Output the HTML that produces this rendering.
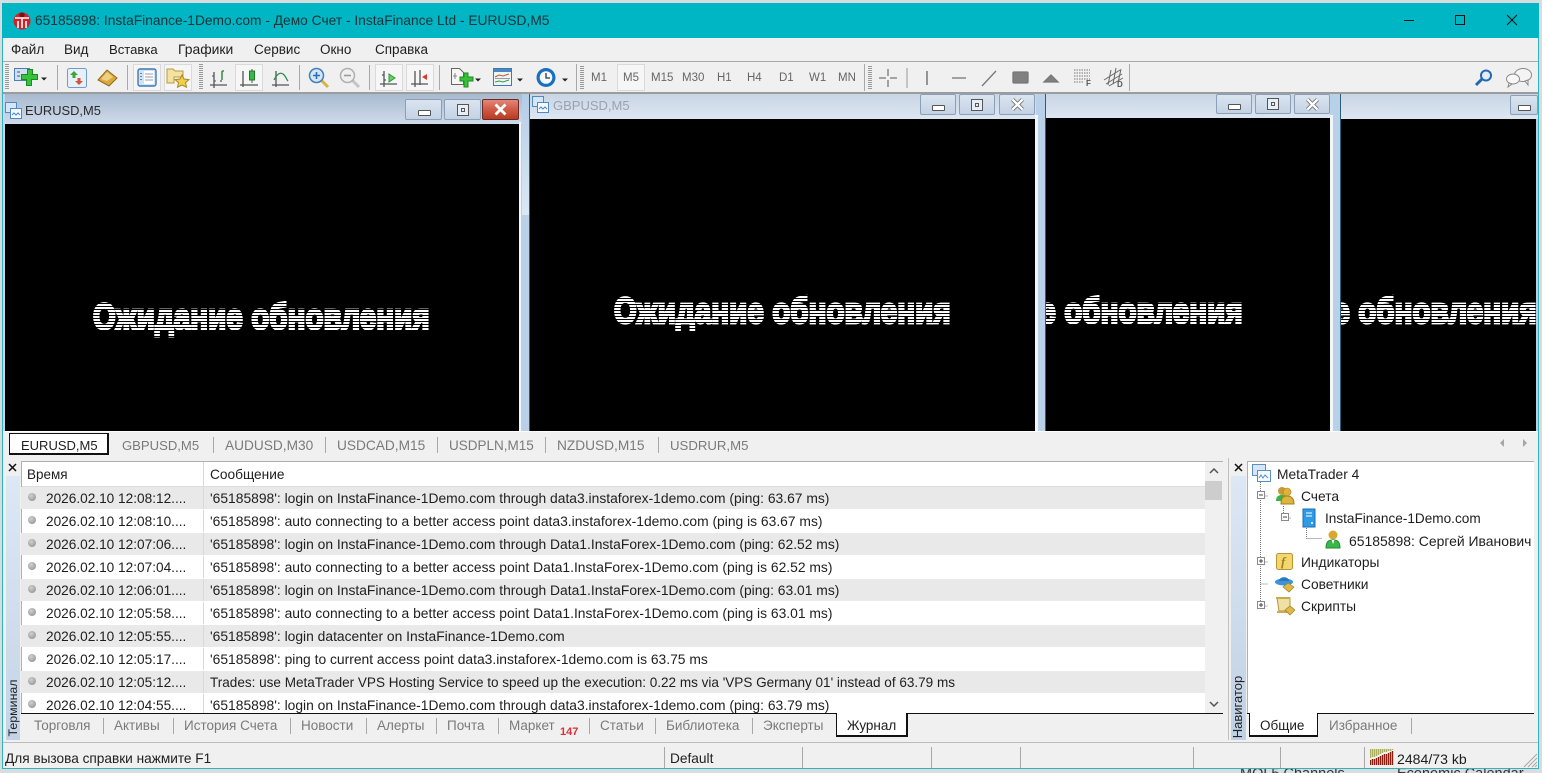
<!DOCTYPE html>
<html><head><meta charset="utf-8">
<style>
html,body{margin:0;padding:0;width:1542px;height:773px;overflow:hidden;background:#d9dcdc}
body{position:relative;font-family:"Liberation Sans",sans-serif;font-size:13.5px;color:#1e1e1e}
div,span,svg{position:absolute}
.t{white-space:nowrap;line-height:16px}
.g{color:#7a7a7a}
.sep{width:1px;background:#a8a8a8}
.prs{background:#f6f6f6;border:1px solid #dadada;box-sizing:border-box}
.grip{width:4px;background:repeating-linear-gradient(#9a9a9a 0 1px,#f0f0f0 1px 2px)}
.wb{box-sizing:border-box;border:1px solid #8ba0b8;border-radius:2px;background:linear-gradient(#dbe5f0,#c3d2e4)}
.min{left:50%;top:50%;width:13px;height:6px;margin:0 0 0 -6px;background:#fff;border:1px solid #555;border-radius:1px;box-sizing:border-box}
.max{left:50%;top:50%;width:12px;height:12px;margin:-6px 0 0 -6px;border:1px solid #555;box-sizing:border-box;background:#e8eef5}
.max:after{content:"";position:absolute;left:3px;top:3px;width:2px;height:2px;border:1px solid #555}
.row{left:21px;width:1184px;height:22px;font-size:13.85px}
.row.o{background:#e9e9e9}
.dot{left:7px;top:6px;width:8px;height:8px;border-radius:50%;background:radial-gradient(circle at 40% 35%,#d0d0d0,#8a8a8a);}
.rt{left:25px;top:4px;font-size:13.65px}
.rm{left:189px;top:3px}
.cs{left:182px;top:0;width:1px;height:22px;background:#d8d8d8}
.black{background:#000}
.wait{font:bold 30px "Liberation Sans",sans-serif;letter-spacing:.3px;white-space:nowrap;color:#fff;-webkit-text-stroke:2.2px #fff;line-height:36px;height:36px;transform-origin:0 50%;transform:scale(.971,1.2)}
.st{left:0;top:0;right:0;bottom:0;background:repeating-linear-gradient(transparent 0 2px,#000 2px 3px)}
.tr{font-size:13.8px}
</style></head><body>

<!-- background fragments -->
<div class="t" style="left:1240px;top:766px;color:#333;font-size:14.5px">MQL5 Channels</div>
<div class="t" style="left:1397px;top:766px;color:#333;font-size:14.5px">Economic Calendar</div>

<!-- window -->
<div style="left:2px;top:3px;width:1537px;height:766px;background:#f0f0f0;box-sizing:border-box;border:1px solid #2fb4bf;border-top:0"></div>
<div style="left:2px;top:3px;width:1537px;height:35px;background:#01b6c4"></div>
<svg style="left:12px;top:11px" width="20" height="20" viewBox="0 0 20 20"><circle cx="10" cy="10" r="8.5" fill="#d32027"/><circle cx="10" cy="4" r="2.6" fill="#7a0f12"/><path d="M3 7h14M6 10v7M10 7v10M14 10v7" stroke="#fff" stroke-width="1.6" fill="none"/></svg>
<div class="t" style="left:35px;top:13px;font-size:13.77px;color:#1d3238">65185898: InstaFinance-1Demo.com - Демо Счет - InstaFinance Ltd - EURUSD,M5</div>
<svg style="left:1400px;top:10px" width="130" height="22" viewBox="0 0 130 22"><path d="M4 10.5h10" stroke="#111" fill="none"/><rect x="55.5" y="5.5" width="9" height="9" stroke="#111" fill="none"/><path d="M107 5l10 10M117 5l-10 10" stroke="#111" fill="none"/></svg>

<!-- menu -->
<div class="t" style="left:11px;top:42px">Файл</div>
<div class="t" style="left:64px;top:42px">Вид</div>
<div class="t" style="left:109px;top:42px;font-size:13.1px">Вставка</div>
<div class="t" style="left:178px;top:41px;font-size:13.9px">Графики</div>
<div class="t" style="left:254px;top:42px">Сервис</div>
<div class="t" style="left:320px;top:42px">Окно</div>
<div class="t" style="left:375px;top:42px">Справка</div>
<div style="left:3px;top:61px;width:1535px;height:1px;background:#a9a9a9"></div>

<!-- toolbar -->
<div class="grip" style="left:5px;top:64px;height:26px"></div>
<svg style="left:13px;top:66px" width="36" height="24" viewBox="0 0 36 24"><rect x="1.5" y="2.5" width="15" height="12" fill="#cfe0f3" stroke="#4a7fb5"/><path d="M4 6h3M4 10h3" stroke="#555"/><path d="M9 8h6v-5h5v5h-1v0h6v5h-6v6h-5v-6H9z" transform="translate(-.5 .5)" fill="#38c13b" stroke="#1b8a20"/><path d="M28 11.5h6l-3 3z" fill="#222"/></svg>
<div class="sep" style="left:57px;top:65px;height:25px"></div>
<svg style="left:66px;top:67px" width="22" height="22" viewBox="0 0 22 22"><rect x="1.5" y="1.5" width="19" height="19" rx="2" fill="#e7eff8" stroke="#6d9dcb"/><path d="M8 4l4 4H9.500v3H6.500V8H4z" fill="#3aa63a"/><path d="M13 18l-4-4h2.500v-3h3v3H17z" fill="#d7543c"/></svg>
<svg style="left:96px;top:67px" width="24" height="22" viewBox="0 0 24 22"><path d="M2 13L11 3l10 8-8 8z" fill="#d8a93c" stroke="#8f6a1d"/><path d="M5 12l6-7 6 5-6 4z" fill="#efd080"/></svg>
<div class="sep" style="left:127px;top:65px;height:25px"></div>
<div class="prs" style="left:133px;top:64px;width:28px;height:27px"></div>
<svg style="left:137px;top:68px" width="20" height="19" viewBox="0 0 20 19"><rect x="1" y="1" width="18" height="17" rx="2" fill="#cfe3f7" stroke="#3f79b3" stroke-width="1.400"/><rect x="7" y="3" width="10" height="13" fill="#fff"/><path d="M4 5v1M4 8v1M4 11v1" stroke="#222"/><path d="M8 6h8M8 9h8M8 12h8" stroke="#99b"/></svg>
<div class="prs" style="left:164px;top:64px;width:28px;height:27px"></div>
<svg style="left:166px;top:67px" width="24" height="22" viewBox="0 0 24 22"><path d="M1 2h6l2 2h8v6H8v6H1z" fill="#f4e2a0" stroke="#b89a3c"/><path d="M16 8l2 4 5 .6-3.500 3 1 4.600L16 18l-4.500 2.200 1-4.600-3.500-3 5-.6z" fill="#f1cf4a" stroke="#a9882a"/></svg>
<div class="grip" style="left:199px;top:64px;height:26px"></div>
<svg style="left:209px;top:68px" width="20" height="20" viewBox="0 0 20 20" fill="none"><path d="M1 17h17M5 4v16M13 3v9M11 13h2M13 3h2" stroke="#555" stroke-width="1.300"/><path d="M5 8H3M5 13h2" stroke="#555"/><path d="M13 3v8" stroke="#2a9a3c" stroke-width="1.300"/></svg>
<div class="prs" style="left:235px;top:64px;width:28px;height:27px"></div>
<svg style="left:239px;top:67px" width="20" height="21" viewBox="0 0 20 21" fill="none"><path d="M1 18h18M4 4v16" stroke="#555" stroke-width="1.300"/><path d="M13 2v14" stroke="#555"/><rect x="10.500" y="4" width="5" height="9" fill="#3cb64a" stroke="#1d7a28"/></svg>
<svg style="left:271px;top:68px" width="20" height="20" viewBox="0 0 20 20" fill="none"><path d="M1 17h17M5 3v16" stroke="#555" stroke-width="1.300"/><path d="M3 12C6 6 9 4 12 6s3 5 5 7" stroke="#2a8a4c" stroke-width="1.300"/></svg>
<div class="sep" style="left:299px;top:65px;height:25px"></div>
<svg style="left:308px;top:67px" width="22" height="22" viewBox="0 0 22 22" fill="none"><path d="M13 13l7 7" stroke="#d8b43c" stroke-width="3"/><circle cx="8.500" cy="8.500" r="7" fill="#d3e6f7" stroke="#3f7fbf" stroke-width="1.500"/><path d="M5 8.500h7M8.500 5v7" stroke="#2a6fb0" stroke-width="1.600"/></svg>
<svg style="left:339px;top:67px" width="22" height="22" viewBox="0 0 22 22" fill="none"><path d="M13 13l7 7" stroke="#c4c4c4" stroke-width="3"/><circle cx="8.500" cy="8.500" r="7" fill="#f0f0f0" stroke="#b0b0b0" stroke-width="1.500"/><path d="M5 8.500h7" stroke="#999" stroke-width="1.600"/></svg>
<div class="sep" style="left:369px;top:65px;height:25px"></div>
<div class="prs" style="left:375px;top:64px;width:28px;height:27px"></div>
<svg style="left:379px;top:68px" width="20" height="20" viewBox="0 0 20 20" fill="none"><path d="M1 16h17M5 3v16M3 7h2M5 12h2" stroke="#555" stroke-width="1.300"/><path d="M10 6l6 4-6 4z" fill="#6fcf5a" stroke="#2a9a3c"/></svg>
<div class="prs" style="left:406px;top:64px;width:28px;height:27px"></div>
<svg style="left:410px;top:68px" width="20" height="20" viewBox="0 0 20 20" fill="none"><path d="M1 16h17M5 3v16M10 2v15" stroke="#555" stroke-width="1.300"/><path d="M12 9l5-3v6z" fill="#d73a2c"/></svg>
<div class="sep" style="left:439px;top:65px;height:25px"></div>
<svg style="left:450px;top:67px" width="34" height="24" viewBox="0 0 34 24"><path d="M1.500 1.500h8l4 4v12h-12z" fill="#f6f6f6" stroke="#666"/><path d="M5 6v6M3 9h4" stroke="#888"/><path d="M10 10h4V6h4v4h5v4h-5v6h-4v-6h-4z" fill="#38c13b" stroke="#1b8a20"/><path d="M25 11.500h6l-3 3z" fill="#222"/></svg>
<svg style="left:493px;top:68px" width="34" height="20" viewBox="0 0 34 20" fill="none"><rect x=".5" y=".5" width="18" height="17" fill="#eef4fb" stroke="#3f79b3"/><rect x="1" y="1" width="17" height="3" fill="#4a86c0"/><path d="M2 9l4-2 4 1 6-2" stroke="#c6552b"/><path d="M2 14l4-1 4 1 6-2" stroke="#3a9a3c"/><path d="M2 10.500h15" stroke="#999"/><path d="M24 10.500h6l-3 3z" fill="#222"/></svg>
<svg style="left:536px;top:67px" width="36" height="22" viewBox="0 0 36 22" fill="none"><circle cx="10" cy="10.500" r="9.500" fill="#1a6fbf"/><circle cx="10" cy="10.500" r="6.300" fill="#f4f8fc"/><path d="M10 6v5h4" stroke="#333" stroke-width="1.300"/><path d="M26 11.500h6l-3 3z" fill="#222"/></svg>
<div class="sep" style="left:576px;top:64px;height:27px"></div>
<div class="grip" style="left:580px;top:66px;height:24px"></div>
<div class="prs" style="left:617px;top:64px;width:28px;height:27px"></div>
<div class="t" style="left:591px;top:70px;font-size:11.500px;color:#666">M1</div>
<div class="t" style="left:623px;top:70px;font-size:11.500px;color:#666">M5</div>
<div class="t" style="left:651px;top:70px;font-size:11.500px;color:#666">M15</div>
<div class="t" style="left:682px;top:70px;font-size:11.500px;color:#666">M30</div>
<div class="t" style="left:717px;top:70px;font-size:11.500px;color:#666">H1</div>
<div class="t" style="left:747px;top:70px;font-size:11.500px;color:#666">H4</div>
<div class="t" style="left:779px;top:70px;font-size:11.500px;color:#666">D1</div>
<div class="t" style="left:809px;top:70px;font-size:11.500px;color:#666">W1</div>
<div class="t" style="left:838px;top:70px;font-size:11.500px;color:#666">MN</div>
<div class="sep" style="left:864px;top:64px;height:27px"></div>
<div class="grip" style="left:868px;top:66px;height:24px"></div>
<svg style="left:878px;top:67px" width="230" height="22" viewBox="0 0 230 22" fill="none" stroke="#777" stroke-width="1.300">
<path d="M1 11h7M12 11h7M10 2v7M10 13v7"/>
<path d="M29 1v20" stroke="#999" stroke-width="1"/>
<path d="M49 5v14" stroke-width="1.500" transform="translate(0 -1)"/>
<path d="M74 11h14"/>
<path d="M104 19L118 4"/>
<rect x="135" y="5" width="15" height="11" rx="1" fill="#808080"/>
<path d="M166 15l7-7 7 7z" fill="#808080"/>
<path d="M196 3h16M196 6h16M196 9h16M196 12h16M196 15h10" stroke-dasharray="1.500 1" stroke-width="1"/>
</svg>
<div class="t" style="left:1086px;top:79px;font:bold 8px 'Liberation Sans',sans-serif;color:#555;line-height:9px">F</div>
<svg style="left:1103px;top:67px" width="22" height="22" viewBox="0 0 22 22" fill="none" stroke="#666"><path d="M1 13L17 3M3 17L19 7M6 19L20 11M8 3l-3 15M13 1l-3 16M18 2l-3 14"/></svg>
<div class="t" style="left:1117px;top:80px;font:bold 8px 'Liberation Sans',sans-serif;color:#555;line-height:9px">D</div>
<div class="sep" style="left:1129px;top:64px;height:27px"></div>
<svg style="left:1474px;top:68px" width="20" height="20" viewBox="0 0 20 20" fill="none"><circle cx="12" cy="7.500" r="5" fill="#e4eefa" stroke="#2467b3" stroke-width="2"/><path d="M8 11l-6 6" stroke="#2467b3" stroke-width="3"/></svg>
<svg style="left:1505px;top:67px" width="28" height="22" viewBox="0 0 28 22"><ellipse cx="18" cy="8" rx="8.500" ry="6.500" fill="#f4f4f4" stroke="#8a8a8a"/><path d="M20 14l3 4v-5z" fill="#f4f4f4" stroke="#8a8a8a"/><ellipse cx="8" cy="12" rx="6.500" ry="5" fill="#f8f8f8" stroke="#8a8a8a"/><path d="M4 16l-1 4 4-3z" fill="#f4f4f4" stroke="#8a8a8a"/></svg>
<div style="left:3px;top:92px;width:1535px;height:2px;background:#9c9c9c"></div>

<!-- MDI -->
<div style="left:3px;top:94px;width:1535px;height:338px;background:#b9d1e8"></div>

<!-- chart 4 -->
<div style="left:1340px;top:94px;width:198px;height:25px;background:linear-gradient(#c9d5e4,#dde7f2)"></div>
<div class="black" style="left:1341px;top:119px;width:195px;height:312px;overflow:hidden"><div class="wait" style="left:-141px;top:175px">Ожидание обновления</div><div class="st"></div></div>
<div style="left:1340px;top:94px;width:1px;height:337px;background:#2b5d78"></div>
<div class="wb" style="left:1510px;top:95px;width:28px;height:20px"><div class="min"></div></div>

<!-- chart 3 -->
<div style="left:1045px;top:94px;width:285px;height:25px;background:linear-gradient(#c9d5e4,#dde7f2)"></div>
<div class="black" style="left:1046px;top:118px;width:284px;height:313px;overflow:hidden"><div class="wait" style="left:-140px;top:176px">Ожидание обновления</div><div class="st"></div></div>
<div style="left:1045px;top:94px;width:1px;height:337px;background:#2b5d78"></div>
<div style="left:1330px;top:115px;width:3px;height:316px;background:#f2f6fa"></div>
<div class="wb" style="left:1216px;top:94px;width:36px;height:20px"><div class="min"></div></div>
<div class="wb" style="left:1255px;top:94px;width:36px;height:20px"><div class="max"></div></div>
<div class="wb" style="left:1294px;top:94px;width:36px;height:20px"><svg style="left:11px;top:3px" width="13" height="13" viewBox="0 0 13 13"><path d="M1.500 1.500l10 10M11.500 1.500l-10 10" stroke="#666" stroke-width="4"/><path d="M1.500 1.500l10 10M11.500 1.500l-10 10" stroke="#fff" stroke-width="2.400"/></svg></div>

<!-- chart 2 -->
<div style="left:529px;top:94px;width:507px;height:25px;background:linear-gradient(#c9d5e4,#dde7f2)"></div>
<div class="black" style="left:530px;top:119px;width:505px;height:312px;overflow:hidden"><div class="wait" style="left:84px;top:175px">Ожидание обновления</div><div class="st"></div></div>
<div style="left:529px;top:94px;width:1px;height:337px;background:#2b5d78"></div>
<div style="left:1035px;top:115px;width:3px;height:316px;background:#f2f6fa"></div>
<svg style="left:532px;top:96px" width="17" height="17" viewBox="0 0 17 17"><rect x=".5" y=".5" width="11" height="10" fill="#d7e6f6" stroke="#4f8ac5"/><rect x="5.500" y="6.500" width="11" height="10" fill="#f4f9ff" stroke="#4f8ac5"/><path d="M7 13l2-2 2 2 2-2 2 2" stroke="#4f8ac5" fill="none"/></svg>
<div class="t" style="left:553px;top:98px;color:#9aa3ad;font-size:13px">GBPUSD,M5</div>
<div class="wb" style="left:920px;top:94px;width:36px;height:21px"><div class="min"></div></div>
<div class="wb" style="left:959px;top:94px;width:36px;height:21px"><div class="max"></div></div>
<div class="wb" style="left:999px;top:94px;width:36px;height:21px"><svg style="left:11px;top:3px" width="13" height="13" viewBox="0 0 13 13"><path d="M1.500 1.500l10 10M11.500 1.500l-10 10" stroke="#666" stroke-width="4"/><path d="M1.500 1.500l10 10M11.500 1.500l-10 10" stroke="#fff" stroke-width="2.400"/></svg></div>

<!-- chart 1 -->
<div style="left:3px;top:94px;width:519px;height:30px;background:linear-gradient(#a8bad0,#cfdbea)"></div>
<div style="left:3px;top:94px;width:2px;height:337px;background:#c5d7ea"></div>
<div class="black" style="left:5px;top:124px;width:514px;height:307px;overflow:hidden"><div class="wait" style="left:88px;top:176px">Ожидание обновления</div><div class="st"></div></div>
<div style="left:519px;top:122px;width:2px;height:309px;background:#f2f6fa"></div>
<div style="left:522px;top:94px;width:7px;height:121px;background:linear-gradient(#b3cde6,#dbe8f4)"></div>
<svg style="left:5px;top:102px" width="17" height="17" viewBox="0 0 17 17"><rect x=".5" y=".5" width="11" height="10" fill="#d7e6f6" stroke="#4f8ac5"/><rect x="5.500" y="6.500" width="11" height="10" fill="#f4f9ff" stroke="#4f8ac5"/><path d="M7 13l2-2 2 2 2-2 2 2" stroke="#4f8ac5" fill="none"/></svg>
<div class="t" style="left:25px;top:103px;font-size:12.9px;color:#2a2a2a">EURUSD,M5</div>
<div class="wb" style="left:405px;top:99px;width:37px;height:21px"><div class="min"></div></div>
<div class="wb" style="left:444px;top:99px;width:37px;height:21px"><div class="max"></div></div>
<div class="wb" style="left:482px;top:99px;width:37px;height:21px;background:linear-gradient(#e2877a 0,#d05a45 50%,#b83a22 100%);border-color:#6a2a22"><svg style="left:11px;top:3px" width="13" height="13" viewBox="0 0 13 13"><path d="M1.500 1.500l10 10M11.500 1.500l-10 10" stroke="#fff" stroke-width="2.800"/></svg></div>

<!-- chart tabs -->
<div style="left:3px;top:431px;width:1535px;height:1px;background:#fff"></div>
<div style="left:3px;top:432px;width:1535px;height:26px;background:#f0f0f0"></div>
<div style="left:9px;top:433px;width:100px;height:22px;background:#fff;border:1px solid #111;border-bottom:2px solid #111;border-right:2px solid #111;box-sizing:border-box"></div>
<div class="t" style="left:21px;top:438px;font-size:13px">EURUSD,M5</div>
<div class="t g" style="left:122px;top:438px;font-size:13.1px">GBPUSD,M5</div>
<div class="t g" style="left:225px;top:438px;font-size:13.7px">AUDUSD,M30</div>
<div class="t g" style="left:337px;top:438px;font-size:13.7px">USDCAD,M15</div>
<div class="t g" style="left:449px;top:438px;font-size:13.5px">USDPLN,M15</div>
<div class="t g" style="left:557px;top:438px;font-size:13.7px">NZDUSD,M15</div>
<div class="t g" style="left:670px;top:438px;font-size:13.2px">USDRUR,M5</div>
<div class="sep" style="left:213px;top:437px;height:16px"></div>
<div class="sep" style="left:325px;top:437px;height:16px"></div>
<div class="sep" style="left:437px;top:437px;height:16px"></div>
<div class="sep" style="left:545px;top:437px;height:16px"></div>
<div class="sep" style="left:658px;top:437px;height:16px"></div>
<svg style="left:1498px;top:438px" width="32" height="10" viewBox="0 0 32 10"><path d="M6 1L2 5l4 4zM25 1l4 4-4 4z" fill="#a6a6a6"/></svg>

<!-- terminal -->
<div style="left:3px;top:458px;width:1535px;height:284px;background:#f0f0f0"></div>
<div style="left:6px;top:476px;width:14px;height:264px;background:linear-gradient(#dce8f4,#c4d4e6)"></div>
<svg style="left:8px;top:463px" width="9" height="9" viewBox="0 0 9 9"><path d="M1 1l7 7M8 1L1 8" stroke="#111" stroke-width="1.500"/></svg>
<div class="t" style="left:-22px;top:700px;width:70px;font-size:12.4px;transform:rotate(-90deg);text-align:center;color:#222">Терминал</div>
<div style="left:21px;top:461px;width:1202px;height:252px;background:#fff;border-top:1px solid #b0b0b0;box-sizing:border-box"></div>
<div style="left:21px;top:461px;width:1px;height:252px;background:#b0b0b0"></div>
<div class="t" style="left:27px;top:467px">Время</div>
<div class="t" style="left:210px;top:467px;font-size:13.7px">Сообщение</div>
<div style="left:203px;top:462px;width:1px;height:24px;background:#d8d8d8"></div>
<div style="left:22px;top:486px;width:1183px;height:1px;background:#dcdcdc"></div>

<div class="row o" style="top:487px"><div class="dot"></div><div class="t rt">2026.02.10 12:08:12....</div><div class="cs"></div><div class="t rm">'65185898': login on InstaFinance-1Demo.com through data3.instaforex-1demo.com (ping: 63.67 ms)</div></div>
<div class="row" style="top:510px"><div class="dot"></div><div class="t rt">2026.02.10 12:08:10....</div><div class="cs"></div><div class="t rm">'65185898': auto connecting to a better access point data3.instaforex-1demo.com (ping is 63.67 ms)</div></div>
<div class="row o" style="top:533px"><div class="dot"></div><div class="t rt">2026.02.10 12:07:06....</div><div class="cs"></div><div class="t rm">'65185898': login on InstaFinance-1Demo.com through Data1.InstaForex-1Demo.com (ping: 62.52 ms)</div></div>
<div class="row" style="top:556px"><div class="dot"></div><div class="t rt">2026.02.10 12:07:04....</div><div class="cs"></div><div class="t rm">'65185898': auto connecting to a better access point Data1.InstaForex-1Demo.com (ping is 62.52 ms)</div></div>
<div class="row o" style="top:579px"><div class="dot"></div><div class="t rt">2026.02.10 12:06:01....</div><div class="cs"></div><div class="t rm">'65185898': login on InstaFinance-1Demo.com through Data1.InstaForex-1Demo.com (ping: 63.01 ms)</div></div>
<div class="row" style="top:602px"><div class="dot"></div><div class="t rt">2026.02.10 12:05:58....</div><div class="cs"></div><div class="t rm">'65185898': auto connecting to a better access point Data1.InstaForex-1Demo.com (ping is 63.01 ms)</div></div>
<div class="row o" style="top:625px"><div class="dot"></div><div class="t rt">2026.02.10 12:05:55....</div><div class="cs"></div><div class="t rm">'65185898': login datacenter on InstaFinance-1Demo.com</div></div>
<div class="row" style="top:648px"><div class="dot"></div><div class="t rt">2026.02.10 12:05:17....</div><div class="cs"></div><div class="t rm">'65185898': ping to current access point data3.instaforex-1demo.com is 63.75 ms</div></div>
<div class="row o" style="top:671px"><div class="dot"></div><div class="t rt">2026.02.10 12:05:12....</div><div class="cs"></div><div class="t rm" style="font-size:13.54px;top:4px">Trades: use MetaTrader VPS Hosting Service to speed up the execution: 0.22 ms via 'VPS Germany 01' instead of 63.79 ms</div></div>
<div class="row" style="top:694px;height:19px;overflow:hidden"><div class="dot"></div><div class="t rt">2026.02.10 12:04:55....</div><div class="cs"></div><div class="t rm">'65185898': login on InstaFinance-1Demo.com through data3.instaforex-1demo.com (ping: 63.79 ms)</div></div>

<!-- scrollbar -->
<div style="left:1205px;top:462px;width:18px;height:251px;background:#f0f0f0"></div>
<div style="left:1205px;top:481px;width:17px;height:19px;background:#cdcdcd"></div>
<svg style="left:1209px;top:468px" width="10" height="6" viewBox="0 0 10 6"><path d="M1 5l4-4 4 4" stroke="#555" stroke-width="1.500" fill="none"/></svg>
<svg style="left:1209px;top:701px" width="10" height="6" viewBox="0 0 10 6"><path d="M1 1l4 4 4-4" stroke="#555" stroke-width="1.500" fill="none"/></svg>

<!-- terminal tabs -->
<div style="left:21px;top:713px;width:1202px;height:1px;background:#111"></div>
<div style="left:836px;top:713px;width:72px;height:24px;background:#fff;border:1px solid #111;border-right:2px solid #111;border-bottom:2px solid #111;border-top:0;box-sizing:border-box"></div>
<div class="t g" style="left:34px;top:718px">Торговля</div>
<div class="t g" style="left:114px;top:718px">Активы</div>
<div class="t g" style="left:184px;top:718px">История Счета</div>
<div class="t g" style="left:301px;top:718px">Новости</div>
<div class="t g" style="left:377px;top:718px">Алерты</div>
<div class="t g" style="left:447px;top:718px">Почта</div>
<div class="t g" style="left:509px;top:718px">Маркет</div>
<div class="t" style="left:560px;top:725px;font:bold 11px/14px 'Liberation Sans',sans-serif;color:#d8303a">147</div>
<div class="t g" style="left:600px;top:718px">Статьи</div>
<div class="t g" style="left:666px;top:718px">Библиотека</div>
<div class="t g" style="left:763px;top:718px">Эксперты</div>
<div class="t" style="left:847px;top:718px">Журнал</div>
<div class="sep" style="left:103px;top:718px;height:16px"></div>
<div class="sep" style="left:173px;top:718px;height:16px"></div>
<div class="sep" style="left:290px;top:718px;height:16px"></div>
<div class="sep" style="left:366px;top:718px;height:16px"></div>
<div class="sep" style="left:436px;top:718px;height:16px"></div>
<div class="sep" style="left:498px;top:718px;height:16px"></div>
<div class="sep" style="left:589px;top:718px;height:16px"></div>
<div class="sep" style="left:655px;top:718px;height:16px"></div>
<div class="sep" style="left:752px;top:718px;height:16px"></div>

<!-- navigator -->
<div style="left:1228px;top:458px;width:1px;height:282px;background:#c0c0c0"></div>
<div style="left:1231px;top:476px;width:15px;height:264px;background:linear-gradient(#dce8f4,#c0d1e4)"></div>
<svg style="left:1234px;top:463px" width="9" height="9" viewBox="0 0 9 9"><path d="M1 1l7 7M8 1L1 8" stroke="#111" stroke-width="1.500"/></svg>
<div class="t" style="left:1203px;top:699px;width:70px;font-size:13px;text-align:center;transform:rotate(-90deg);color:#222">Навигатор</div>
<div style="left:1247px;top:461px;width:287px;height:252px;background:#fff;border-top:1px solid #b0b0b0;border-left:1px solid #b0b0b0;box-sizing:border-box"></div>
<svg style="left:1252px;top:464px" width="90" height="160" viewBox="0 0 90 160" fill="none">
<path d="M9.500 18v127M9.500 32h8M9.500 98h8M9.500 120h8M9.500 142h8M32.500 42v12M32.500 54h8M55.500 64v10.500M55.500 74.500h16" stroke="#777" stroke-dasharray="1 1" transform="translate(-1 0)"/>
<g fill="#fff" stroke="#8a8a8a"><rect x="5.500" y="27.500" width="7" height="7"/><rect x="29.500" y="49.500" width="7" height="7"/><rect x="5.500" y="93.500" width="7" height="7"/><rect x="5.500" y="137.500" width="7" height="7"/></g>
<path d="M7 31h4M31 53h4M7 97h4M9 95v4M7 141h4M9 139v4" stroke="#444"/>
</svg>
<svg style="left:1252px;top:464px" width="19" height="18" viewBox="0 0 19 18"><rect x=".5" y=".5" width="13" height="11" fill="#d7e6f6" stroke="#5a8fc5"/><rect x="5.500" y="6.500" width="13" height="11" fill="#f4f9ff" stroke="#5a8fc5"/><path d="M7 14l2-3 2 3 2-3 3 3" stroke="#5a8fc5" fill="none"/></svg>
<svg style="left:1275px;top:486px" width="20" height="19" viewBox="0 0 20 19"><circle cx="7" cy="5" r="4" fill="#c99a2e"/><path d="M1 15c0-5 3-6 6-6s6 1 6 6z" fill="#3cb04a"/><circle cx="12" cy="6" r="4" fill="#e0b23c" stroke="#a47e20" stroke-width=".6"/><path d="M6 18c0-7 3-8 6-8s7 1 7 8z" fill="#dcb63a" stroke="#a47e20"/></svg>
<svg style="left:1301px;top:508px" width="16" height="20" viewBox="0 0 16 20"><rect x="2" y="1" width="12" height="18" fill="#2f9be6" stroke="#1a6fb5"/><path d="M5 5h6M5 8h6" stroke="#fff"/><circle cx="11" cy="15" r="1" fill="#fff"/></svg>
<svg style="left:1325px;top:530px" width="16" height="19" viewBox="0 0 16 19"><circle cx="8" cy="5" r="4.500" fill="#d8a830"/><path d="M1 18c0-7 3-8 7-8s7 1 7 8z" fill="#38b84a" stroke="#1f8a2c"/><path d="M6.500 10L8 14l1.500-4z" fill="#fff"/></svg>
<svg style="left:1276px;top:553px" width="17" height="18" viewBox="0 0 17 18"><rect x=".5" y=".5" width="16" height="16" rx="2" fill="#f2d670" stroke="#b8952f"/></svg>
<div class="t" style="left:1281px;top:554px;font:italic bold 13px/16px 'Liberation Serif',serif;color:#a6801e">f</div>
<svg style="left:1275px;top:575px" width="20" height="18" viewBox="0 0 20 18"><ellipse cx="9" cy="7" rx="9" ry="3.500" fill="#3d94d9"/><path d="M4 6C4 1 14 1 14 6z" fill="#2a79bd"/><path d="M8 12l5-4 6 4-5 5z" fill="#e0b84a" stroke="#a08024" stroke-width=".7"/></svg>
<svg style="left:1276px;top:597px" width="19" height="19" viewBox="0 0 19 19"><path d="M1 1h13v13H3z" fill="#efe0a4" stroke="#b19540"/><path d="M0 1h14M1 15h12" stroke="#c9aa4c" stroke-width="2"/><path d="M9 13l5-4 5 4-5 5z" fill="#e0b84a" stroke="#a08024" stroke-width=".7"/></svg>
<div class="t tr" style="left:1277px;top:467px">MetaTrader 4</div>
<div class="t tr" style="left:1301px;top:489px">Счета</div>
<div class="t tr" style="left:1325px;top:511px;font-size:13.6px">InstaFinance-1Demo.com</div>
<div class="t tr" style="left:1349px;top:533px;font-size:13.95px">65185898: Сергей Иванович</div>
<div class="t tr" style="left:1301px;top:555px">Индикаторы</div>
<div class="t tr" style="left:1301px;top:577px">Советники</div>
<div class="t tr" style="left:1301px;top:599px">Скрипты</div>

<div style="left:1247px;top:713px;width:287px;height:1px;background:#111"></div>
<div style="left:1249px;top:713px;width:69px;height:24px;background:#fff;border:1px solid #111;border-top:0;border-bottom:2px solid #111;box-sizing:border-box"></div>
<div class="t" style="left:1260px;top:718px">Общие</div>
<div class="t g" style="left:1329px;top:718px">Избранное</div>
<div class="sep" style="left:1411px;top:718px;height:16px"></div>

<!-- status -->
<div style="left:3px;top:742px;width:1535px;height:1px;background:#bcbcbc"></div>
<div class="t" style="left:5px;top:751px;font-size:13.65px">Для вызова справки нажмите F1</div>
<div class="t" style="left:670px;top:751px;font-size:13.7px">Default</div>
<div class="sep" style="left:664px;top:747px;height:21px"></div>
<div class="sep" style="left:802px;top:747px;height:21px"></div>
<div class="sep" style="left:931px;top:747px;height:21px"></div>
<div class="sep" style="left:1020px;top:747px;height:21px"></div>
<div class="sep" style="left:1193px;top:747px;height:21px"></div>
<div class="sep" style="left:1280px;top:747px;height:21px"></div>
<div class="sep" style="left:1364px;top:747px;height:21px"></div>
<svg style="left:1370px;top:749px" width="24" height="16" viewBox="0 0 24 16" stroke-width="1.400"><path d="M.5 0v9M2.500 0v8M4.500 0v8M6.500 0v7M8.500 0v6M10.500 0v5M12.500 0v4M14.500 0v3M16.500 0v3M18.500 0v2M20.500 0v2M22.500 0v1" stroke="#a8b060"/><path d="M.5 11v5M2.500 10v6M4.500 10v6M6.500 9v7M8.500 8v8M10.500 7v9M12.500 6v10M14.500 5v11M16.500 5v11M18.500 4v12M20.500 3v13M22.500 2v14" stroke="#8a1c10"/></svg>
<div class="t" style="left:1397px;top:751px;font-size:14.1px">2484/73 kb</div>
<svg style="left:1522px;top:752px" width="16" height="16" viewBox="0 0 16 16"><path d="M15 2L2 15M15 6l-9 9M15 10l-5 5M15 13l-2 2" stroke="#a8a8a8"/></svg>
</body></html>
